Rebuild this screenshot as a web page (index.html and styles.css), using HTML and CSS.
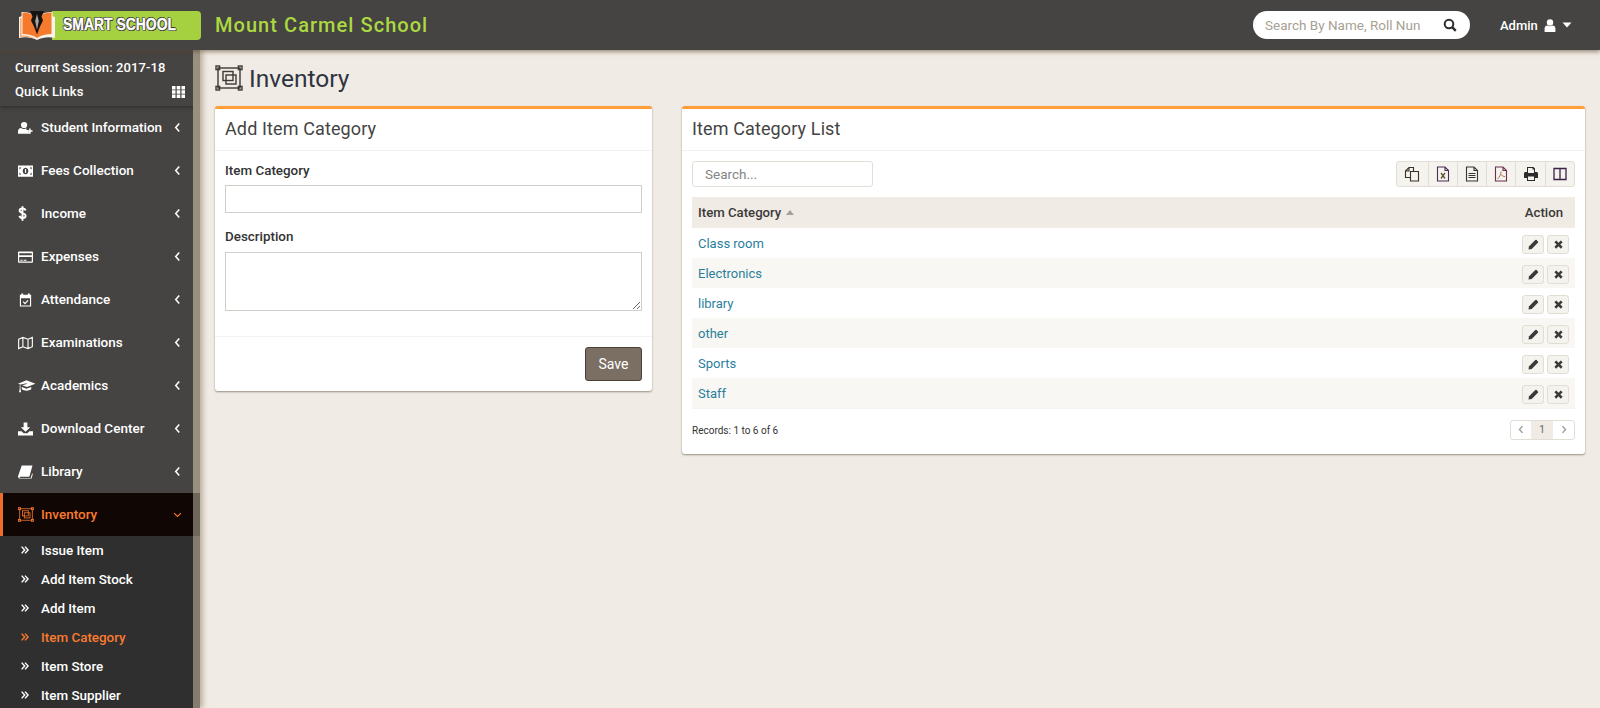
FILE: index.html
```html
<!DOCTYPE html>
<html lang="en">
<head>
<meta charset="utf-8">
<title>Inventory</title>
<link rel="stylesheet" href="styles.css">
</head>
<body>
<svg class="defs" width="0" height="0">
  <symbol id="inv" viewBox="0 0 28 26">
    <g fill="none" stroke="currentColor" stroke-width="1.4">
      <rect x="3" y="3" width="22" height="20"/>
      <rect x="8" y="6.500" width="10" height="9"/>
      <rect x="11" y="10" width="10" height="9"/>
    </g>
    <g fill="none" stroke="currentColor" stroke-width="1.4">
      <rect x="1" y="1" width="3.6" height="3.6"/>
      <rect x="23.4" y="1" width="3.6" height="3.6"/>
      <rect x="1" y="21.4" width="3.6" height="3.6"/>
      <rect x="23.4" y="21.4" width="3.6" height="3.6"/>
    </g>
  </symbol>
  <symbol id="dbl" viewBox="0 0 10 10">
    <path d="M.8.800L4.600 5 .8 9.200M5 .8L8.800 5 5 9.200" fill="none" stroke="currentColor" stroke-width="1.800"/>
  </symbol>
  <symbol id="left" viewBox="0 0 8 12">
    <path d="M6 1.500L2 6l4 4.500" fill="none" stroke="currentColor" stroke-width="1.800"/>
  </symbol>
  <symbol id="pen" viewBox="0 0 12 12">
    <path d="M.5 11.500l.7-3.500L8 1.200a1 1 0 0 1 1.400 0l1.400 1.400a1 1 0 0 1 0 1.400L4 10.800z" fill="currentColor"/>
  </symbol>
  <symbol id="x" viewBox="0 0 12 12">
    <path d="M1.500 3.500L3.500 1.500 6 4l2.500-2.500 2 2L8 6l2.500 2.500-2 2L6 8l-2.500 2.500-2-2L4 6z" fill="currentColor"/>
  </symbol>
</svg>

<header class="topbar">
  <div class="logo-slot">
    <div class="logo">
      <svg class="logo-book" viewBox="0 0 36 29" width="36" height="29">
        <path d="M0 6l2.500-.8V1C8 1 13 2 18 6c5-4 10-5 15.500-5v4.200L36 6v21c-6-1.500-12-1-18 2-6-3-12-3.500-18-2z" fill="#f9f3ea"/>
        <path d="M3.500 1.500C9 1.500 13.500 3 18 7c4.500-4 9-5.500 14.500-5.500V23c-5.500 0-10 1-14.500 4-4.500-3-9-4-14.500-4z" fill="#f57a2e"/>
        <path d="M1.200 7v19c5-.8 11 0 16.300 2.500C12 25 7 24.500 2.500 24.500V7z" fill="#f9a060"/>
        <path d="M11 0h14l-2.500 5.500 1.500 4-3 6-3 8-3-8-3-6 1.500-4z" fill="#171311"/>
        <path d="M18 3l1.800 7-1.800 9-1.800-9z" fill="#a9a59e"/>
      </svg>
      <div class="logo-band"><span class="logo-text">SMART SCHOOL</span></div>
    </div>
  </div>
  <h1 class="school">Mount Carmel School</h1>
  <div class="top-right">
    <div class="search">
      <span class="search-ph">Search By Name, Roll Nun</span>
      <svg viewBox="0 0 14 14" width="14" height="14"><circle cx="6" cy="6" r="4.300" fill="none" stroke="#2e2e2e" stroke-width="2"/><path d="M9.200 9.200l3.600 3.600" stroke="#2e2e2e" stroke-width="2.400"/></svg>
    </div>
    <div class="user">
      <span>Admin</span>
      <svg viewBox="0 0 12 13" width="12" height="13"><circle cx="6" cy="3.500" r="3.200" fill="#fff"/><path d="M.6 13V9.500C.6 7.500 2 6.500 3.200 6.500c1.600 1 4 1 5.600 0 1.200 0 2.600 1 2.600 3V13z" fill="#fff"/></svg>
      <svg viewBox="0 0 10 6" width="10" height="6"><path d="M.5.500h9L5 5.500z" fill="#fff"/></svg>
    </div>
  </div>
</header>

<div class="shell">
  <aside class="sidebar">
    <div class="side-inner">
      <div class="session">
        <div>Current Session: 2017-18</div>
        <div class="quick">
          <span>Quick Links</span>
          <svg viewBox="0 0 13 12" width="13" height="12"><path d="M0 0h3.500v3.500H0zM4.700 0h3.600v3.500H4.700zM9.500 0H13v3.500H9.500zM0 4.300h3.500v3.400H0zM4.700 4.300h3.600v3.400H4.700zM9.500 4.300H13v3.400H9.500zM0 8.500h3.500V12H0zM4.700 8.500h3.600V12H4.700zM9.500 8.500H13V12H9.500z" fill="#fff"/></svg>
        </div>
      </div>
      <nav class="menu">
        <a class="item"><svg class="ico" viewBox="0 0 16 14"><circle cx="6.500" cy="3.800" r="3.300" fill="currentColor"/><path d="M0 13v-2.500C0 8.500 1.500 7 3 7c2 1.200 4.500 1.200 6 .3V9h2v2.500h1.500V13z" fill="currentColor"/><path d="M10 10.200h5.500M12.700 7.500v5.500" stroke="currentColor" stroke-width="1.600"/></svg><span class="lbl">Student Information</span><svg class="chev"><use href="#left"/></svg></a>
        <a class="item"><svg class="ico" viewBox="0 0 16 12"><path fill-rule="evenodd" d="M0 0h16v12H0zM3 2H1.500v2.500A2.500 2.500 0 0 0 3 2zM3 10a2.500 2.500 0 0 0-1.500-2.500V10zM13 2a2.500 2.500 0 0 0 1.500 2.500V2zM14.500 7.500A2.500 2.500 0 0 0 13 10h1.500zM8 2.500a3 3.500 0 1 0 .01 0z" fill="currentColor"/><path d="M8 4v4" stroke="currentColor" stroke-width="1.300"/></svg><span class="lbl">Fees Collection</span><svg class="chev"><use href="#left"/></svg></a>
        <a class="item"><svg class="ico dollar" viewBox="0 0 10 17"><path d="M8.500 5C8 3.300 6.600 2.800 5 2.800 3 2.800 1.700 3.700 1.700 5.200 1.700 8.500 8.500 7.500 8.500 11 8.500 12.600 7 13.600 5 13.600 3.300 13.600 2 12.800 1.500 11.200M5 .3v16.400" fill="none" stroke="currentColor" stroke-width="2.200"/></svg><span class="lbl">Income</span><svg class="chev"><use href="#left"/></svg></a>
        <a class="item"><svg class="ico" viewBox="0 0 16 12"><path fill-rule="evenodd" d="M1 0h14a1 1 0 0 1 1 1v10a1 1 0 0 1-1 1H1a1 1 0 0 1-1-1V1a1 1 0 0 1 1-1zM1.300 2v2h13.400V2zM1.300 6v4.700h13.400V6zM2.500 8.800h2.500V10H2.500zM6 8.800h3V10H6z" fill="currentColor"/></svg><span class="lbl">Expenses</span><svg class="chev"><use href="#left"/></svg></a>
        <a class="item"><svg class="ico" viewBox="0 0 16 14"><path fill-rule="evenodd" d="M2 1.500h1.500V0h2v1.500h5V0h2v1.500H14V14H2zM3.200 5v7.800h9.600V5z" fill="currentColor"/><path d="M5.500 8.800l2 2 3.200-3.400" fill="none" stroke="currentColor" stroke-width="1.300"/></svg><span class="lbl">Attendance</span><svg class="chev"><use href="#left"/></svg></a>
        <a class="item"><svg class="ico" viewBox="0 0 16 14"><path d="M.7 3l4.500-2 5.500 2 4.600-2v10l-4.600 2-5.500-2-4.500 2zM5.200 1v10M10.700 3v10" fill="none" stroke="currentColor" stroke-width="1.200"/></svg><span class="lbl">Examinations</span><svg class="chev"><use href="#left"/></svg></a>
        <a class="item"><svg class="ico wide" viewBox="0 0 18 14"><path d="M9 1L0 4.500l3 1.100v-.100l6-1.500.4 1-5 1.300 5 1.700 9-3.500zM4 8v2.500c2.500 2 7.500 2 10 0V8L9 9.800zM1.800 6.200V10l-.7 3.500h2.200L2.600 10V6.500z" fill="currentColor"/></svg><span class="lbl">Academics</span><svg class="chev"><use href="#left"/></svg></a>
        <a class="item"><svg class="ico" viewBox="0 0 16 14"><path d="M6 0h4v5h3l-5 5-5-5h3zM0 9.500h3.800L6 11.500h4l2.200-2H16V14H0z" fill="currentColor"/></svg><span class="lbl">Download Center</span><svg class="chev"><use href="#left"/></svg></a>
        <a class="item"><svg class="ico" viewBox="0 0 16 14"><path fill-rule="evenodd" d="M4 0h11.500l-.4 1.500-3 10.500H3c-1 0-1.300.4-1.300.8 0 .3.300.7 1.300.7h10.500l1.500-5 .8.600L14.500 14H2.500C1 14 0 13 0 11.500z" fill="currentColor"/></svg><span class="lbl">Library</span><svg class="chev"><use href="#left"/></svg></a>
        <a class="item active"><svg class="ico inv"><use href="#inv"/></svg><span class="lbl">Inventory</span><svg class="chev down" viewBox="0 0 12 8"><path d="M1.500 1.500L6 6l4.500-4.500" fill="none" stroke="currentColor" stroke-width="1.500"/></svg></a>
      </nav>
      <ul class="submenu">
        <li><svg class="dbl"><use href="#dbl"/></svg>Issue Item</li>
        <li><svg class="dbl"><use href="#dbl"/></svg>Add Item Stock</li>
        <li><svg class="dbl"><use href="#dbl"/></svg>Add Item</li>
        <li class="on"><svg class="dbl"><use href="#dbl"/></svg>Item Category</li>
        <li><svg class="dbl"><use href="#dbl"/></svg>Item Store</li>
        <li><svg class="dbl"><use href="#dbl"/></svg>Item Supplier</li>
      </ul>
    </div>
    <div class="gutter"></div>
  </aside>

  <main class="main">
    <div class="page-title">
      <svg class="title-ico"><use href="#inv"/></svg>
      <h2>Inventory</h2>
    </div>
    <div class="columns">
      <section class="card form-card">
        <h3 class="card-title">Add Item Category</h3>
        <div class="form-body">
          <label class="lab">Item Category</label>
          <input class="field" type="text">
          <label class="lab second">Description</label>
          <textarea class="field area"></textarea>
        </div>
        <div class="form-foot"><button class="save">Save</button></div>
      </section>

      <section class="card list-card">
        <h3 class="card-title">Item Category List</h3>
        <div class="list-body">
          <div class="tools">
            <div class="tsearch">Search...</div>
            <div class="tbtns">
              <span class="tb"><svg viewBox="0 0 16 16" width="16" height="16"><path d="M1.500 5L5 1.500H9.500V5.500M5 1.500V5H1.500V11.500H6M6.500 5.500H14.500V15H6.500z" fill="none" stroke="#3a3226" stroke-width="1.100"/></svg></span>
              <span class="tb"><svg viewBox="0 0 14 16" width="14" height="16"><path d="M1.500 1h7.500l3.500 3.500V15h-11zM9 1v3.500h3.500" fill="none" stroke="#4a2c55" stroke-width="1.100"/><path d="M5 7l4 5.500M9 7l-4 5.500" stroke="#5d5330" stroke-width="1.300"/></svg></span>
              <span class="tb"><svg viewBox="0 0 14 16" width="14" height="16"><path d="M1.500 1h7.500l3.500 3.500V15h-11zM9 1v3.500h3.500" fill="none" stroke="#3a3636" stroke-width="1.100"/><path d="M3.500 7.500h7M3.500 9.500h7M3.500 11.500h7" stroke="#3a3636"/></svg></span>
              <span class="tb"><svg viewBox="0 0 14 16" width="14" height="16"><path d="M1.500 1h7.500l3.500 3.500V15h-11zM9 1v3.500h3.500" fill="none" stroke="#6b2f4c" stroke-width="1.100"/><path d="M7 5.500c0 3-1.500 5.500-3.500 7.500M7 8.500c1 1.200 2.500 2 4 2.200" fill="none" stroke="#b3705c"/></svg></span>
              <span class="tb"><svg viewBox="0 0 14 14" width="14" height="14"><path fill-rule="evenodd" d="M3 0h6.500L11 1.500V5h1.500c.8 0 1.500.7 1.500 1.500V11h-3v3H3v-3H0V6.500C0 5.700.7 5 1.500 5H3zM4 1v5h6V2.500H8.500V1zM4 9.500V13h6V9.500z" fill="#2d2b2b"/></svg></span>
              <span class="tb"><svg viewBox="0 0 14 14" width="14" height="14"><path d="M1 1.500h12v11H1zM7 1.500v11" fill="none" stroke="#3b2146" stroke-width="1.300"/></svg></span>
            </div>
          </div>
          <table class="grid">
            <thead><tr><th>Item Category <i class="sort"></i></th><th class="act">Action</th></tr></thead>
            <tbody>
              <tr><td><a>Class room</a></td><td class="act"><span class="ab"><svg><use href="#pen"/></svg></span><span class="ab"><svg><use href="#x"/></svg></span></td></tr>
              <tr><td><a>Electronics</a></td><td class="act"><span class="ab"><svg><use href="#pen"/></svg></span><span class="ab"><svg><use href="#x"/></svg></span></td></tr>
              <tr><td><a>library</a></td><td class="act"><span class="ab"><svg><use href="#pen"/></svg></span><span class="ab"><svg><use href="#x"/></svg></span></td></tr>
              <tr><td><a>other</a></td><td class="act"><span class="ab"><svg><use href="#pen"/></svg></span><span class="ab"><svg><use href="#x"/></svg></span></td></tr>
              <tr><td><a>Sports</a></td><td class="act"><span class="ab"><svg><use href="#pen"/></svg></span><span class="ab"><svg><use href="#x"/></svg></span></td></tr>
              <tr><td><a>Staff</a></td><td class="act"><span class="ab"><svg><use href="#pen"/></svg></span><span class="ab"><svg><use href="#x"/></svg></span></td></tr>
            </tbody>
          </table>
          <div class="list-foot">
            <span class="records">Records: 1 to 6 of 6</span>
            <div class="pager">
              <span class="pg"><svg width="6" height="9"><use href="#left"/></svg></span>
              <span class="pg cur">1</span>
              <span class="pg"><svg class="flip" width="6" height="9"><use href="#left"/></svg></span>
            </div>
          </div>
        </div>
      </section>
    </div>
  </main>
</div>
</body>
</html>
```

FILE: styles.css
```css
* { box-sizing: border-box; }
html, body { margin: 0; height: 708px; overflow: hidden; }
body { font-family: Roboto, "Liberation Sans", sans-serif; font-size: 14px; color: #333; background: #f0ebe4; display: flex; flex-direction: column; }
.defs { display: block; height: 0; width: 0; }

.topbar { height: 50px; flex: none; background: #454443; display: flex; align-items: center; position: relative; z-index: 3; box-shadow: 0 2px 4px rgba(90, 70, 40, .55); }
.logo-slot { width: 215px; flex: none; padding-left: 19px; }
.logo { width: 162px; height: 29px; display: flex; }
.logo-book { flex: none; position: relative; z-index: 1; }
.logo-band { flex: 1; margin-left: -3px; background: #a5d03f; border-radius: 0 4px 4px 0; display: flex; align-items: center; padding-left: 11px; }
.logo-text { font-family: "Liberation Sans", sans-serif; font-size: 17px; font-weight: 700; color: #fff; -webkit-text-stroke: .3px #fff; text-shadow: 1px 0 0 #3c3b38, -1px 0 0 #3c3b38, 0 1px 0 #3c3b38, 0 -1px 0 #3c3b38, 1px 1px 0 #3c3b38, -1px -1px 0 #3c3b38; white-space: nowrap; transform: scaleX(.82); transform-origin: left center; }
.school { margin: 0; font-size: 20px; font-weight: 500; color: #acd940; letter-spacing: 1.05px; }
.top-right { margin-left: auto; display: flex; align-items: center; }
.search { width: 217px; height: 28px; background: #fff; border-radius: 14px; display: flex; align-items: center; justify-content: space-between; padding: 0 13px 0 12px; }
.search-ph { color: #a89f95; font-size: 13.5px; }
.user { display: flex; align-items: center; gap: 6px; color: #fff; font-weight: 500; font-size: 13px; margin-left: 30px; width: 100px; }

.shell { flex: 1; display: flex; min-height: 0; }
.sidebar { width: 200px; flex: none; display: flex; position: relative; z-index: 2; box-shadow: 3px 0 5px rgba(110, 90, 60, .4); }
.side-inner { width: 193px; background: #454443; overflow: hidden; height: 658px; }
.gutter { width: 7px; background: linear-gradient(to bottom, #9a9080 0, #9a9080 443px, #6f675c 443px, #6f675c 486px, #857b6e 486px, #857b6e 100%); }
.session { height: 56px; padding: 6px 15px 0; color: #fff; font-size: 13px; font-weight: 500; letter-spacing: .1px; line-height: 24px; box-shadow: 0 1px 4px rgba(0, 0, 0, .4); position: relative; width: 200px; }
.quick { display: flex; justify-content: space-between; align-items: center; }
.menu { display: flex; flex-direction: column; }
.item { height: 43px; display: flex; align-items: center; color: #fff; font-size: 13.5px; font-weight: 500; padding-left: 18px; position: relative; }
.ico { width: 15px; height: 14px; margin-right: 8px; flex: none; overflow: visible; }
.ico.wide { width: 17px; margin-right: 6px; }
.ico.inv { width: 16px; height: 15px; margin-right: 7px; }
.ico.dollar { width: 9px; height: 15px; margin-right: 14px; }
.lbl { flex: 1; padding-bottom: 2px; }
.chev { width: 7px; height: 11px; margin-right: 12px; flex: none; }
.chev.down { width: 9px; height: 6px; margin-right: 11px; }
.item.active { background: #100604; color: #f97a30; border-left: 3px solid #ef6c2a; padding-left: 15px; }
.submenu { list-style: none; margin: 0; padding: 0; background: #2f2f2f; }
.submenu li { height: 29px; display: flex; align-items: center; color: #fff; font-size: 13.4px; font-weight: 500; padding: 0 0 1px 21px; }
.submenu .on { color: #f97a30; }
.dbl { width: 8px; height: 8px; margin-right: 12px; flex: none; }

.main { flex: 1; padding: 13px 15px 0; min-width: 0; }
.page-title { height: 43px; display: flex; align-items: flex-start; color: #2f3441; }
.title-ico { width: 28px; height: 26px; margin-right: 6px; margin-top: 2px; color: #3e3a35; }
.page-title h2 { margin: 1px 0 0; font-size: 24.5px; font-weight: 400; line-height: 30px; }
.columns { display: flex; align-items: flex-start; gap: 30px; }
.card { background: #fff; border-top: 3px solid #ff9e3a; border-radius: 3px; box-shadow: 0 1px 2px rgba(80, 70, 50, .55); }
.form-card { width: 437px; height: 285px; }
.list-card { width: 903px; height: 348px; }
.card-title { margin: 0; height: 42px; padding: 0 10px; line-height: 39px; font-size: 18px; letter-spacing: .12px; font-weight: 400; color: #444; border-bottom: 1px solid #f4f2ee; }
.form-body { padding: 12px 10px 0; height: 185px; }
.lab { display: block; font-size: 13.4px; font-weight: 500; color: #333; height: 16px; line-height: 16px; margin-bottom: 6px; }
.lab.second { margin-top: 16px; margin-bottom: 7px; }
.field { display: block; width: 100%; height: 28px; border: 1px solid #d2cec9; background: #fff; border-radius: 0; padding: 0; margin: 0; outline: none; }
.area { height: 59px; resize: vertical; }
.form-foot { border-top: 1px solid #f4f2ee; padding: 10px 10px 0; display: flex; justify-content: flex-end; }
.save { width: 57px; height: 34px; background: #7b6f64; border: 1px solid #4a4037; border-radius: 3px; color: #fff; font: 400 14px Roboto, sans-serif; padding: 0; }

.list-body { padding: 10px 10px 0; }
.tools { display: flex; justify-content: space-between; height: 27px; margin-bottom: 9px; }
.tsearch { width: 181px; height: 26px; border: 1px solid #e3dfd8; border-radius: 3px; padding-left: 12px; font-size: 13.5px; line-height: 24px; color: #858585; }
.tbtns { display: flex; height: 26px; border: 1px solid #e3ded5; border-radius: 3px; background: #f5f3ee; }
.tb { width: 29.300px; display: flex; align-items: center; justify-content: center; border-left: 1px solid #e3ded5; }
.tb:first-child { border-left: 0; width: 31px; }
.grid { width: 100%; border-collapse: collapse; font-size: 13px; }
.grid th { height: 31px; background: #f0ebe4; text-align: left; font-size: 13.2px; font-weight: 500; padding: 0 6px; color: #3a3a3a; }
.grid th.act { text-align: right; padding-right: 12px; }
.grid td { height: 30px; padding: 0 6px; }
.grid tbody tr:nth-child(even) { background: #f9f7f3; }
.grid a { color: #2a7f9c; font-size: 13px; }
.sort { display: inline-block; margin-left: 1px; vertical-align: 2px; border: 4.500px solid transparent; border-top: 0; border-bottom: 5px solid #a89f95; }
.act { text-align: right; white-space: nowrap; }
.ab { display: inline-flex; width: 22px; height: 19px; margin-left: 3px; margin-top: 2px; align-items: center; justify-content: center; background: #f5f3ee; border: 1px solid #e3ded5; border-radius: 3px; color: #3a3a3a; vertical-align: middle; }
.ab svg { width: 11px; height: 11px; }
.list-foot { display: flex; justify-content: space-between; align-items: center; height: 38px; padding-top: 4px; border-top: 1px solid #f6f3ee; }
.records { font-size: 10px; color: #333; padding-top: 2px; }
.pager { display: flex; height: 20px; border: 1px solid #e3ded5; border-radius: 3px; }
.pg { width: 21px; display: flex; align-items: center; justify-content: center; font-size: 10px; color: #666; }
.pg:first-child { width: 20px; }
.pg.cur { background: #f0ebe4; width: 22px; }
.pg svg { color: #9a9a9a; }
.flip { transform: scaleX(-1); }
```
